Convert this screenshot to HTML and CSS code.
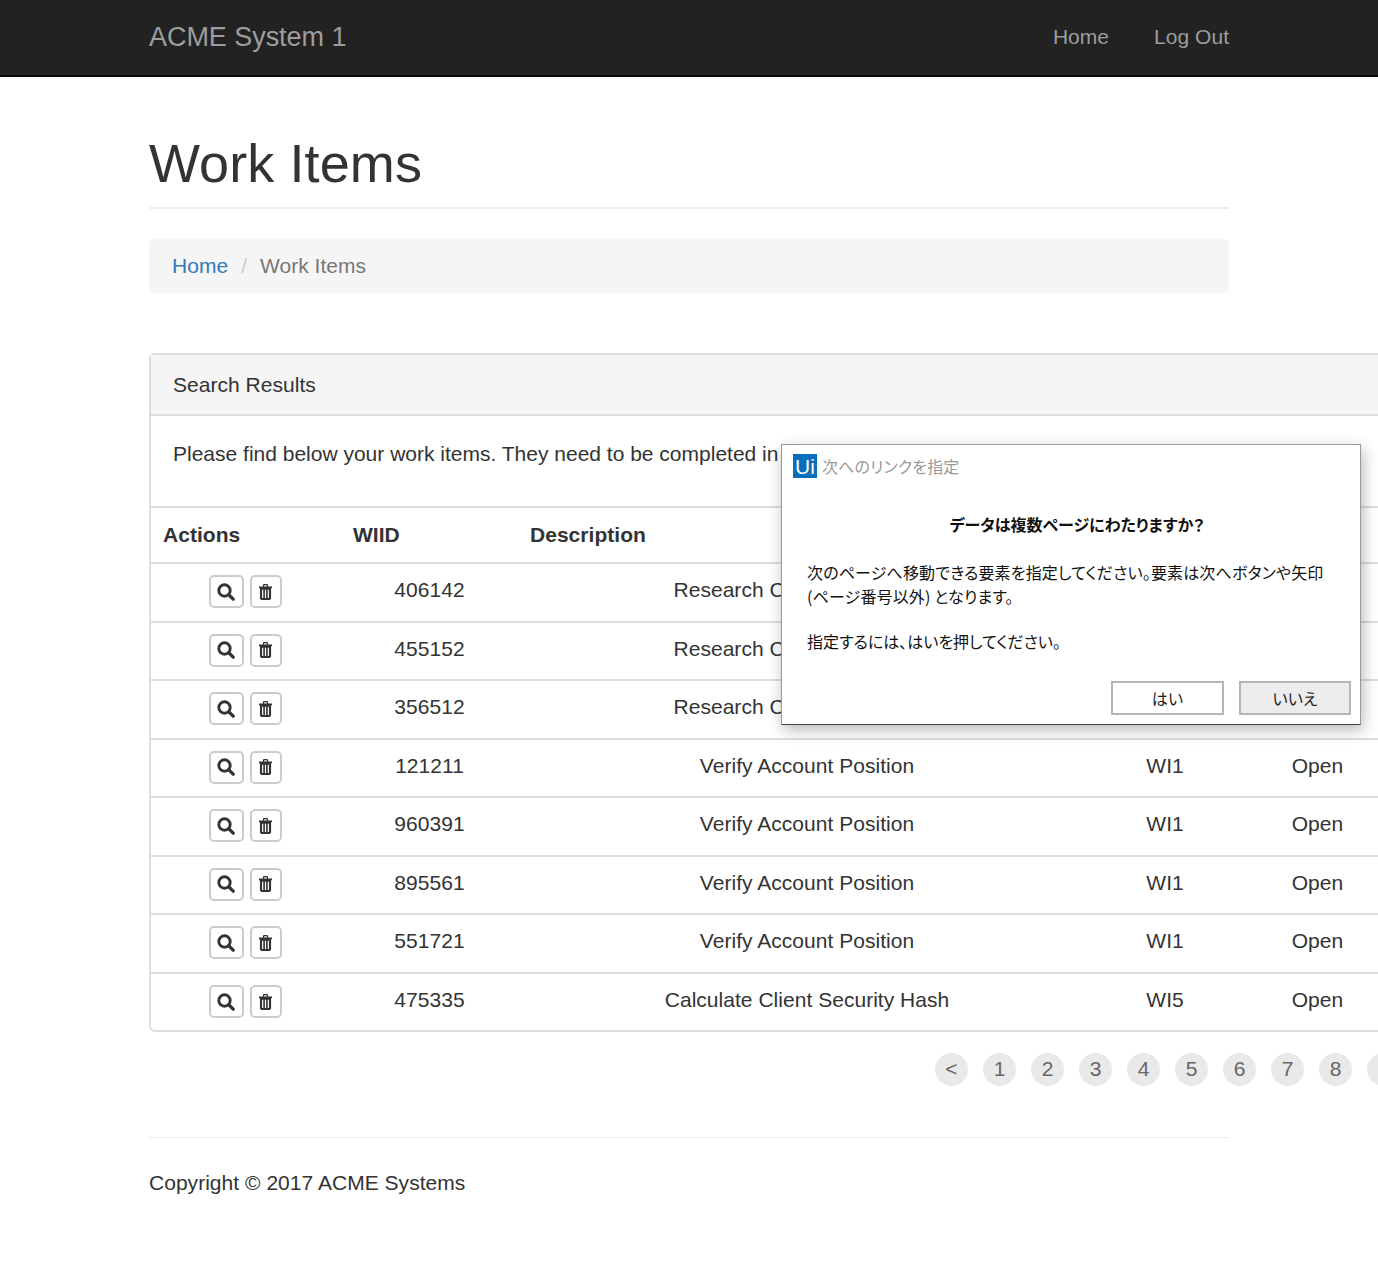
FILE: index.html
```html
<!DOCTYPE html>
<html lang="en">
<head>
<meta charset="utf-8">
<title>Work Items</title>
<link rel="stylesheet" href="styles.css">
</head>
<body>
<svg class="sprite" width="0" height="0" aria-hidden="true">
  <symbol id="i-search" viewBox="0 0 18 18">
    <circle cx="7.500" cy="7.500" r="5.700" fill="none" stroke="currentColor" stroke-width="2.900"/>
    <path d="M12 12 16.200 16.200" fill="none" stroke="currentColor" stroke-width="3.200" stroke-linecap="round"/>
  </symbol>
  <symbol id="i-trash" viewBox="0 0 14 17">
    <path fill="currentColor" fill-rule="evenodd" d="M4.200 1 5 0h4l.8 1v1.500H14v2H13V15.500L11.800 17H2.200L1 15.500V4.500H0v-2H4.200V1ZM5.600 1.300v1.200h2.800V1.300H5.600ZM3.300 6v9h1.300V6H3.300ZM6.350 6v9h1.300V6H6.350ZM9.400 6v9h1.300V6H9.400Z"/>
  </symbol>
</svg>
<header class="navbar">
  <div class="nav-inner">
    <a class="brand">ACME System 1</a>
    <nav class="nav-links"><a>Home</a><a>Log Out</a></nav>
  </div>
</header>
<main class="container">
  <h1 class="page-title">Work Items</h1>
  <ol class="breadcrumb">
    <li><a class="crumb-link">Home</a></li>
    <li class="crumb-sep">/</li>
    <li class="crumb-active">Work Items</li>
  </ol>
  <section class="panel">
    <div class="panel-heading">Search Results</div>
    <div class="panel-body">Please find below your work items. They need to be completed in a timely manner.</div>
    <table class="items">
      <thead>
        <tr><th class="c1">Actions</th><th class="c2">WIID</th><th class="c3">Description</th><th class="c4">Type</th><th class="c5">Status</th></tr>
      </thead>
      <tbody>
        <tr><td><span class="act act-s"><svg class="ic-s"><use href="#i-search"/></svg></span><span class="act act-t"><svg class="ic-t"><use href="#i-trash"/></svg></span></td><td>406142</td><td>Research Client Certification</td><td>WI2</td><td>Open</td></tr>
        <tr><td><span class="act act-s"><svg class="ic-s"><use href="#i-search"/></svg></span><span class="act act-t"><svg class="ic-t"><use href="#i-trash"/></svg></span></td><td>455152</td><td>Research Client Certification</td><td>WI2</td><td>Open</td></tr>
        <tr><td><span class="act act-s"><svg class="ic-s"><use href="#i-search"/></svg></span><span class="act act-t"><svg class="ic-t"><use href="#i-trash"/></svg></span></td><td>356512</td><td>Research Client Certification</td><td>WI2</td><td>Open</td></tr>
        <tr><td><span class="act act-s"><svg class="ic-s"><use href="#i-search"/></svg></span><span class="act act-t"><svg class="ic-t"><use href="#i-trash"/></svg></span></td><td>121211</td><td>Verify Account Position</td><td>WI1</td><td>Open</td></tr>
        <tr><td><span class="act act-s"><svg class="ic-s"><use href="#i-search"/></svg></span><span class="act act-t"><svg class="ic-t"><use href="#i-trash"/></svg></span></td><td>960391</td><td>Verify Account Position</td><td>WI1</td><td>Open</td></tr>
        <tr><td><span class="act act-s"><svg class="ic-s"><use href="#i-search"/></svg></span><span class="act act-t"><svg class="ic-t"><use href="#i-trash"/></svg></span></td><td>895561</td><td>Verify Account Position</td><td>WI1</td><td>Open</td></tr>
        <tr><td><span class="act act-s"><svg class="ic-s"><use href="#i-search"/></svg></span><span class="act act-t"><svg class="ic-t"><use href="#i-trash"/></svg></span></td><td>551721</td><td>Verify Account Position</td><td>WI1</td><td>Open</td></tr>
        <tr><td><span class="act act-s"><svg class="ic-s"><use href="#i-search"/></svg></span><span class="act act-t"><svg class="ic-t"><use href="#i-trash"/></svg></span></td><td>475335</td><td>Calculate Client Security Hash</td><td>WI5</td><td>Open</td></tr>
      </tbody>
    </table>
  </section>
  <div class="pager">
    <a>&lt;</a><a>1</a><a>2</a><a>3</a><a>4</a><a>5</a><a>6</a><a>7</a><a>8</a><a></a>
  </div>
  <footer class="footer">Copyright © 2017 ACME Systems</footer>
</main>
<aside class="dialog">
  <div class="dlg-title"><span class="dlg-logo">Ui</span><span class="dlg-caption">次へのリンクを指定</span></div>
  <div class="dlg-head">データは複数ページにわたりますか？</div>
  <p class="dlg-text">次のページへ移動できる要素を指定してください。要素は次へボタンや矢印<br>(ページ番号以外) となります。</p>
  <p class="dlg-text dlg-last">指定するには、はいを押してください。</p>
  <div class="dlg-actions"><button class="dlg-btn">はい</button><button class="dlg-btn dlg-btn-no">いいえ</button></div>
</aside>
</body>
</html>
```
FILE: styles.css
```css
html, body { margin: 0; padding: 0; }
body {
  font-family: "Liberation Sans", Arial, sans-serif;
  font-size: 21px;
  line-height: 30px;
  letter-spacing: .03px;
  color: #333;
  background: #fff;
  width: 1378px;
  height: 1279px;
  overflow: hidden;
  position: relative;
}
.sprite { position: absolute; }
.navbar {
  height: 75px;
  background: #222;
  border-bottom: 2px solid #080808;
}
.nav-inner {
  width: 1080px;
  margin-left: 149px;
  display: flex;
  justify-content: space-between;
  align-items: center;
  height: 74px;
}
.brand { font-size: 27px; color: #9d9d9d; letter-spacing: -.05px; }
.nav-links { display: flex; gap: 45px; color: #9d9d9d; }
.container { width: 1229px; margin-left: 149px; }
.page-title {
  width: 1080px;
  box-sizing: border-box;
  margin: 0;
  padding-top: 56px;
  height: 132px;
  font-size: 54px;
  line-height: 60px;
  font-weight: 500;
  letter-spacing: .1px;
  border-bottom: 2px solid #eee;
}
.breadcrumb {
  list-style: none;
  width: 1080px;
  box-sizing: border-box;
  margin: 30px 0 60px;
  padding: 12px 23px;
  height: 54px;
  background: #f5f5f5;
  border-radius: 6px;
  display: flex;
  gap: 13px;
}
.crumb-link { color: #337ab7; }
.crumb-sep { color: #ccc; }
.crumb-active { color: #777; }
.panel {
  width: 1300px;
  height: 679px;
  box-sizing: border-box;
  border: 2px solid #ddd;
  border-radius: 6px;
}
.panel-heading {
  height: 61px;
  box-sizing: border-box;
  padding: 15px 22px;
  background: #f5f5f5;
  border-bottom: 2px solid #ddd;
}
.panel-body {
  height: 90px;
  box-sizing: border-box;
  padding: 23px 22px;
  letter-spacing: 0;
}
.items {
  border-collapse: collapse;
  table-layout: fixed;
  width: 1250px;
}
.items th {
  height: 56px;
  box-sizing: border-box;
  text-align: left;
  padding: 0 12px;
  border-top: 2px solid #ddd;
  border-bottom: 2px solid #ddd;
  font-weight: 700;
}
.items td {
  height: 58.5px;
  box-sizing: border-box;
  text-align: center;
  padding: 0 12px 4px;
  border-top: 2px solid #ddd;
}
.items td:first-child { padding-right: 14px; }
.c1 { width: 190px; }
.c2 { width: 177px; }
.c3 { width: 578px; }
.c4 { width: 138px; }
.c5 { width: 167px; }
.act {
  display: inline-flex;
  align-items: center;
  justify-content: center;
  height: 33px;
  box-sizing: border-box;
  border: 2px solid #ccc;
  border-radius: 5px;
  vertical-align: middle;
  color: #333;
  margin-top: 3px;
}
.act-s { width: 35px; margin-right: 6px; }
.act-t { width: 32px; }
.ic-s { width: 18px; height: 18px; }
.ic-t { width: 13px; height: 16px; }
.pager {
  width: 1229px;
  margin-top: 21px;
  margin-left: 786px;
  display: flex;
  gap: 15px;
  height: 33px;
}
.pager a {
  flex: none;
  width: 33px;
  height: 33px;
  border-radius: 50%;
  background: #e9e9e9;
  color: #666;
  text-align: center;
  line-height: 31px;
}
.footer {
  width: 1080px;
  margin-top: 51px;
  padding-top: 30px;
  border-top: 1px solid #eee;
}
.dialog {
  position: absolute;
  left: 781px;
  top: 444px;
  width: 580px;
  height: 281px;
  box-sizing: border-box;
  background: #fff;
  border: 1px solid #9a9a9a;
  border-bottom: 1px solid #444;
  box-shadow: 2px 5px 14px rgba(0,0,0,.28);
  font-family: "Noto Sans CJK JP", "Liberation Sans", sans-serif;
  font-size: 16px;
  font-feature-settings: "palt";
  letter-spacing: .15px;
  line-height: 24px;
  color: #111;
}
.dlg-title { display: flex; align-items: center; gap: 5px; margin: 9px 0 0 11px; height: 24px; }
.dlg-logo {
  width: 24px;
  height: 24px;
  background: #0a6ebd;
  color: #fff;
  font-family: "Liberation Sans", sans-serif;
  font-size: 21px;
  text-align: center;
  line-height: 25px;
}
.dlg-caption { color: #999; }
.dlg-head { margin-top: 34px; padding-left: 12px; text-align: center; font-weight: 700; letter-spacing: 0; }
.dlg-text { margin: 24px 0 0 25px; }
.dlg-last { margin-top: 21px; letter-spacing: 0; }
.dlg-actions {
  position: absolute;
  right: 9px;
  bottom: 9px;
  display: flex;
  gap: 15px;
}
.dlg-btn {
  width: 113px;
  height: 34px;
  box-sizing: border-box;
  padding: 0;
  border: 2px solid #b5b5b5;
  background: #fff;
  font: inherit;
  font-feature-settings: inherit;
  letter-spacing: inherit;
  color: #222;
}
.dlg-btn-no { width: 112px; background: #ececec; }
```
